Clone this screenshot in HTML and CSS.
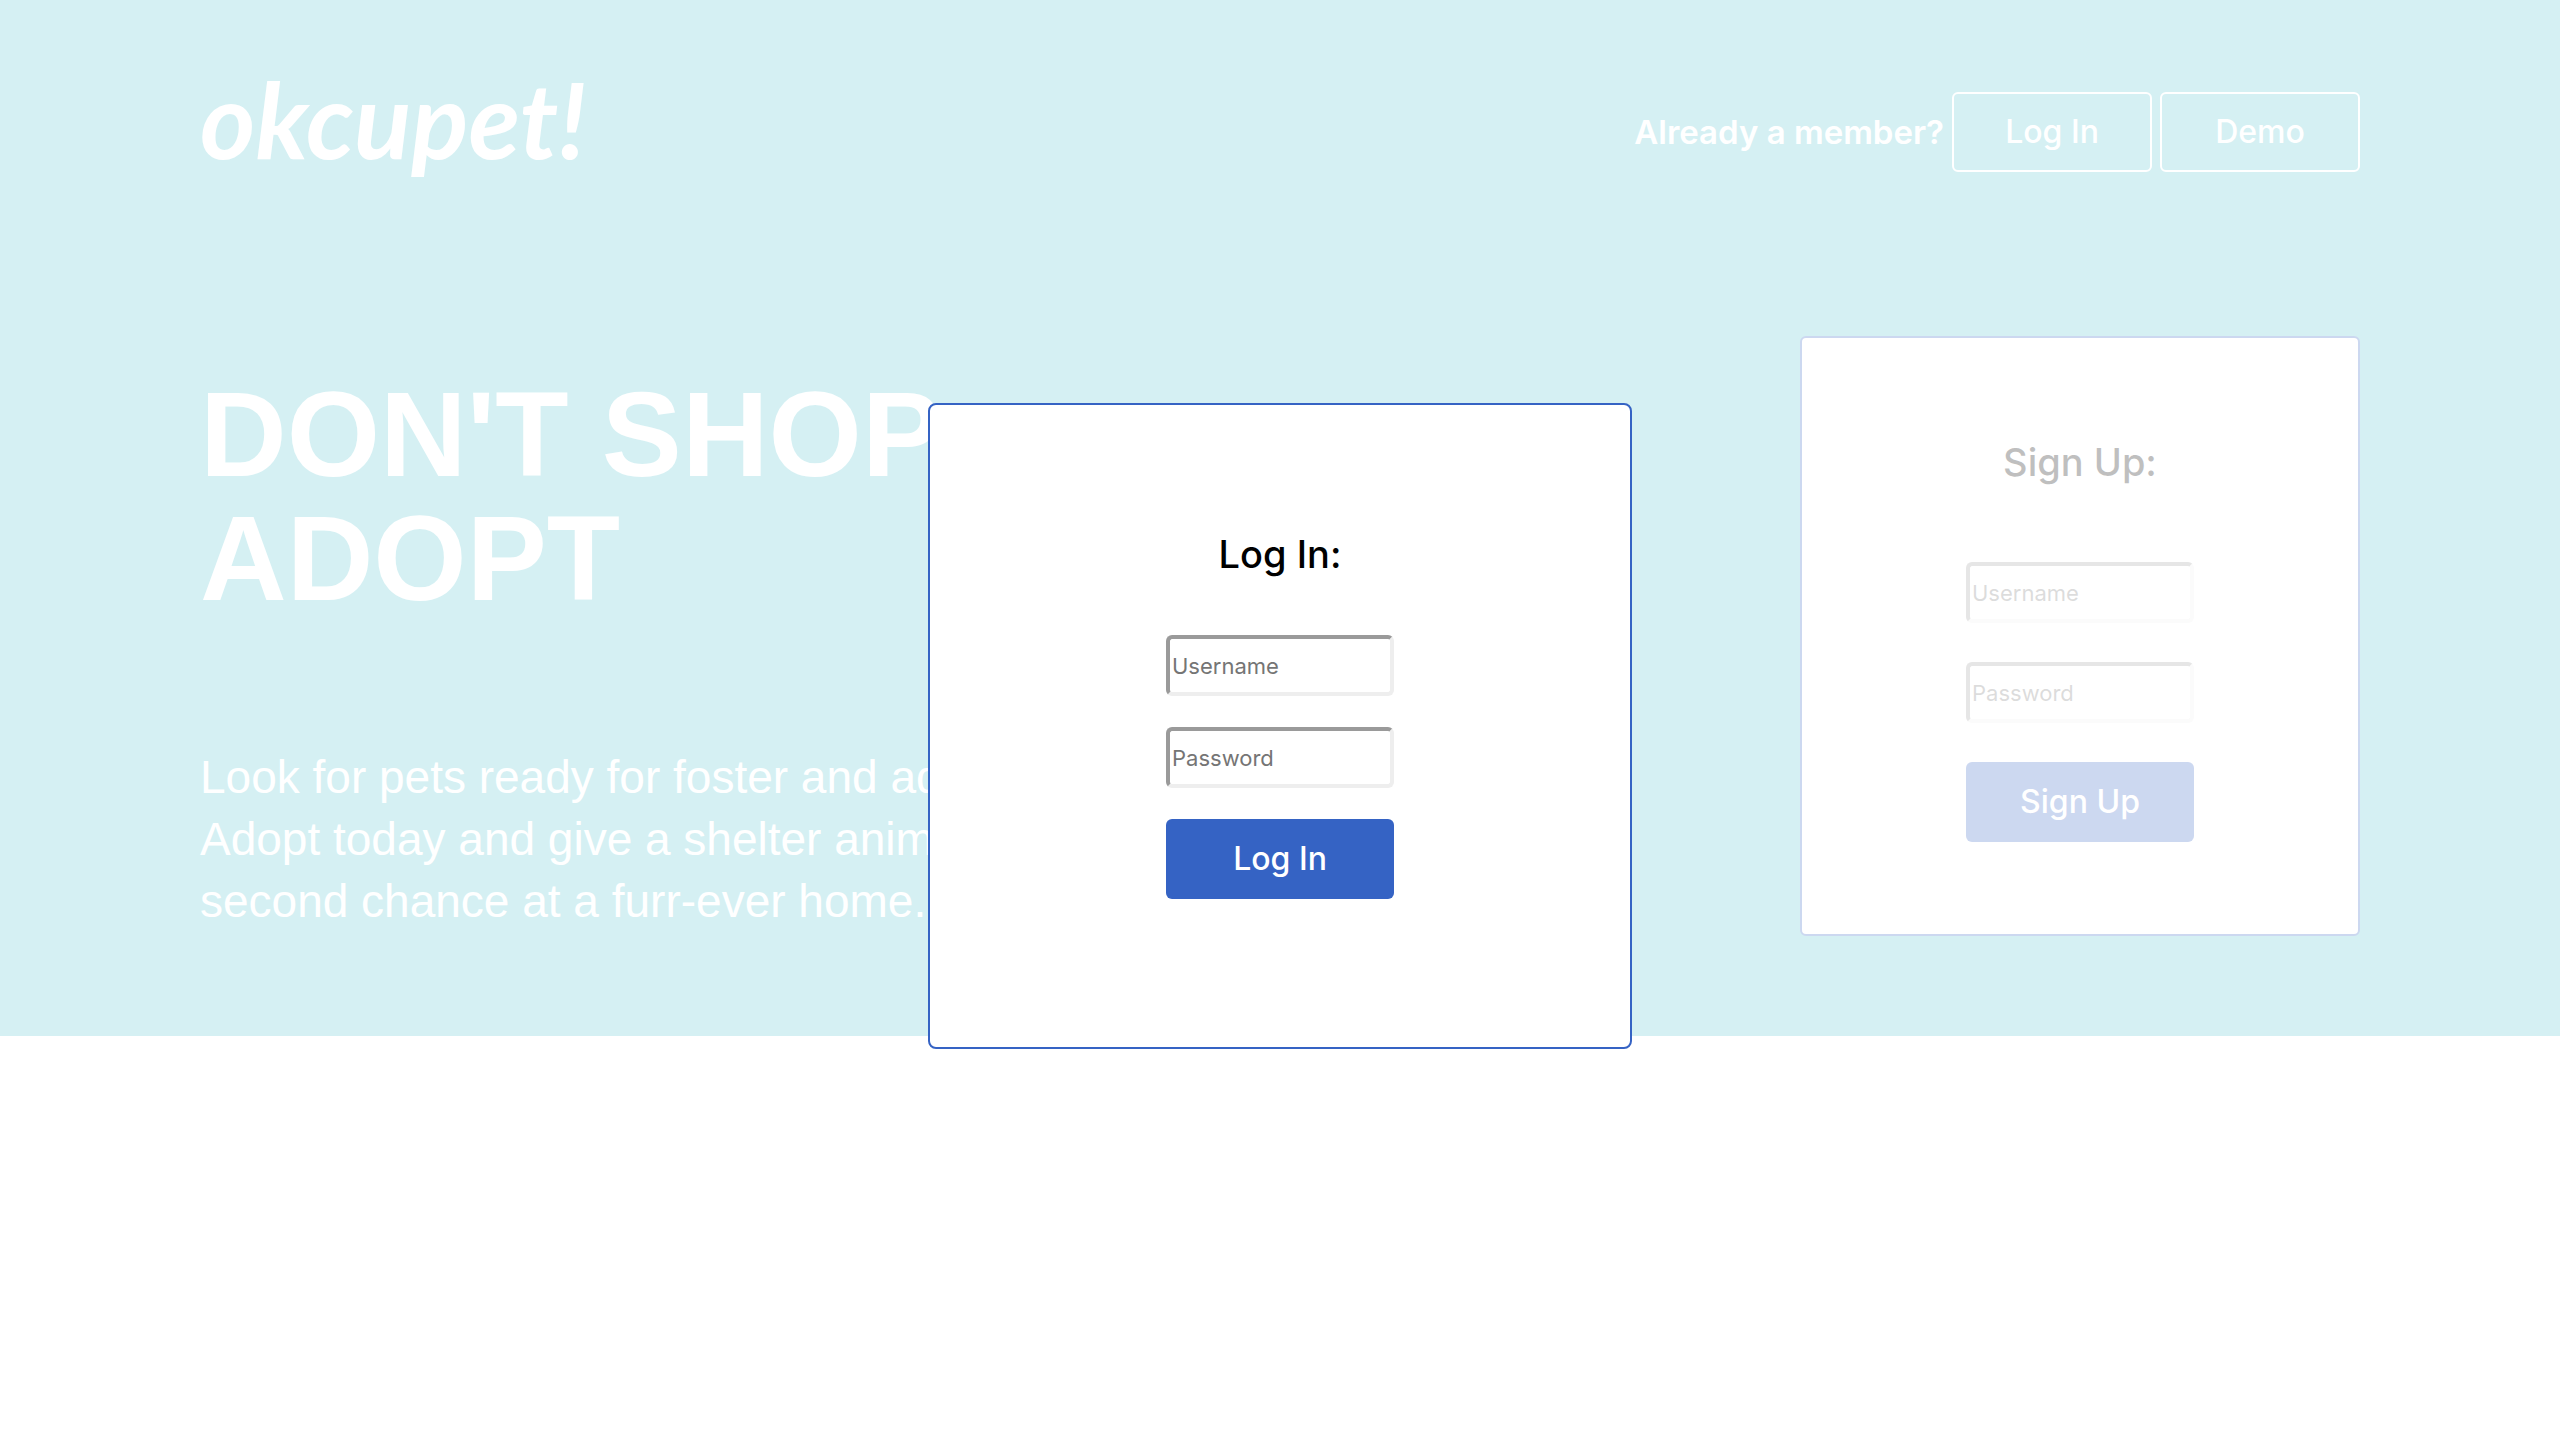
FILE: index.html
```html
<!DOCTYPE html>
<html lang="en">
<head>
  <meta charset="utf-8">
  <title>okcupet!</title>
  <link rel="stylesheet" href="styles.css">
</head>
<body>
  <div class="splash">
    <header class="site-header">
      <a class="logo" href="#">okcupet!</a>
      <nav class="member-nav">
        <span class="member-prompt">Already a member?</span>
        <button class="nav-button" type="button">Log In</button>
        <button class="nav-button" type="button">Demo</button>
      </nav>
    </header>
    <main class="hero">
      <section class="pitch">
        <h1 class="headline">DON'T SHOP<br>ADOPT</h1>
        <p class="tagline">Look for pets ready for foster and adoption.<br>Adopt today and give a shelter animal a<br>second chance at a furr-ever home.</p>
      </section>
      <form class="card signup">
        <h2 class="card-title">Sign Up:</h2>
        <input class="field" type="text" placeholder="Username" aria-label="Username">
        <input class="field" type="password" placeholder="Password" aria-label="Password">
        <button class="submit" type="submit">Sign Up</button>
      </form>
    </main>
  </div>
  <div class="backdrop">
    <form class="card login" role="dialog" aria-label="Log In">
      <h2 class="card-title">Log In:</h2>
      <input class="field" type="text" placeholder="Username" aria-label="Username">
      <input class="field" type="password" placeholder="Password" aria-label="Password">
      <button class="submit" type="submit">Log In</button>
    </form>
  </div>
</body>
</html>
```
FILE: styles.css
```css
* {
  box-sizing: border-box;
}

body {
  margin: 0;
  background: #fff;
  font-family: "Liberation Sans", Arial, sans-serif;
}

.splash {
  padding: 52px 200px 100px;
  background: #57c3cf;
  color: #fff;
}

.site-header {
  display: flex;
  align-items: center;
  justify-content: space-between;
  height: 160px;
}

.logo {
  margin-bottom: 28px;
  color: #fff;
  font: italic bold 106px/132px Lato, sans-serif;
  text-decoration: none;
}

.member-nav {
  display: flex;
  align-items: center;
  gap: 8px;
}

.member-prompt {
  font: 600 33px/40px Inter, sans-serif;
}

.nav-button {
  width: 200px;
  height: 80px;
  padding: 0;
  border: 2px solid #fff;
  border-radius: 6px;
  background: transparent;
  color: #fff;
  font: 500 32px/40px Inter, sans-serif;
}

.hero {
  display: flex;
  align-items: flex-start;
  justify-content: space-between;
  margin-top: 124px;
}

.pitch {
  padding-top: 36px;
}

.headline {
  margin: 0 0 126px;
  font-size: 120px;
  line-height: 124px;
}

.tagline {
  margin: 0;
  font-size: 46px;
  line-height: 62px;
}

.card {
  display: flex;
  flex-direction: column;
  align-items: center;
  border: 2px solid #3563c4;
  background: #fff;
  color: #000;
}

.card-title {
  margin: 0;
  font: 500 38px/48px Inter, sans-serif;
}

.field {
  width: 228px;
  height: 61px;
  padding: 0 2px;
  border: 4px solid #eee;
  border-top-color: #9a9a9a;
  border-left-color: #9a9a9a;
  border-radius: 6px;
  background: #fff;
  font: 22px/28px Inter, sans-serif;
}

.field::placeholder {
  color: #757575;
  opacity: 1;
}

.submit {
  width: 228px;
  height: 80px;
  padding: 0;
  border: 0;
  border-radius: 6px;
  background: #3563c4;
  color: #fff;
  font: 500 32px/40px Inter, sans-serif;
}

.signup {
  gap: 39px;
  width: 560px;
  padding: 100px 0 92px;
  border-radius: 6px;
}

.signup .card-title {
  margin-bottom: 37px;
}

.login {
  gap: 31px;
  width: 704px;
  padding: 125px 0 148px;
  border-radius: 8px;
}

.login .card-title {
  margin-bottom: 26px;
}

/* Translucent sheet that dims the page behind the dialog */
.backdrop {
  position: fixed;
  inset: 0;
  display: flex;
  align-items: center;
  justify-content: center;
  background: rgba(255, 255, 255, 0.75);
}
```
